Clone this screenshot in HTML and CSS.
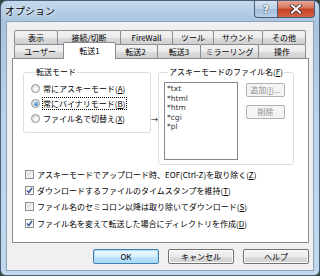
FILE: index.html
```html
<!DOCTYPE html>
<html lang="ja">
<head>
    <meta charset="UTF-8">
    <title>オプション</title>
    <link rel="stylesheet" href="styles.css">
</head>
<body>
<div class="window">
    <div class="titlebar">
        <span class="title">オプション</span>
        <div class="caption">
            <span class="cap-help">?</span>
            <span class="cap-close">
                <svg width="12" height="10" viewBox="0 0 12 10">
                    <path d="M2 1.5 L10 8.5 M10 1.5 L2 8.5" stroke="#3a2a2a" stroke-width="3.6" stroke-linecap="square"/>
                    <path d="M2 1.5 L10 8.5 M10 1.5 L2 8.5" stroke="#ffffff" stroke-width="2" stroke-linecap="square"/>
                </svg>
            </span>
        </div>
    </div>

    <div class="client">
        <div class="tabctl">
            <div class="tabrow">
                <div class="tab w44">表示</div>
                <div class="tab w64">接続/切断</div>
                <div class="tab w53">FireWall</div>
                <div class="tab w42">ツール</div>
                <div class="tab w50">サウンド</div>
                <div class="tab w44">その他</div>
            </div>
            <div class="tabrow">
                <div class="tab w52">ユーザー</div>
                <div class="tab w49 selected">転送1</div>
                <div class="tab w45">転送2</div>
                <div class="tab w44">転送3</div>
                <div class="tab w59">ミラーリング</div>
                <div class="tab w48">操作</div>
            </div>

            <div class="panel">
                <div class="toprow">
                    <fieldset class="group mode">
                        <legend>転送モード</legend>
                        <div class="radio"><span class="rb"></span><span>常にアスキーモード(<u>A</u>)</span></div>
                        <div class="radio"><span class="rb on"></span><span class="focus">常にバイナリモード(<u>B</u>)</span></div>
                        <div class="radio"><span class="rb"></span><span>ファイル名で切替え(<u>X</u>)</span></div>
                    </fieldset>

                    <div class="arrow">→</div>

                    <fieldset class="group ascii">
                        <legend>アスキーモードのファイル名(<u>F</u>)</legend>
                        <div class="listrow">
                            <ul class="listbox">
                                <li>*txt</li>
                                <li>*html</li>
                                <li>*htm</li>
                                <li>*cgi</li>
                                <li>*pl</li>
                            </ul>
                            <div class="sidebtns">
                                <div class="btn disabled">追加(<u>I</u>)...</div>
                                <div class="btn disabled">削除</div>
                            </div>
                        </div>
                    </fieldset>
                </div>

                <div class="checks">
                    <div class="check"><span class="cb"></span><span>アスキーモードでアップロード時、EOF(Ctrl-Z)を取り除く(<u>Z</u>)</span></div>
                    <div class="check"><span class="cb on"><svg width="7" height="7" viewBox="0 0 7 7"><path d="M1 3.5 L2.8 5.5 L6 1" fill="none" stroke="#3d5a94" stroke-width="1.5"/></svg></span><span>ダウンロードするファイルのタイムスタンプを維持(<u>T</u>)</span></div>
                    <div class="check"><span class="cb"></span><span>ファイル名のセミコロン以降は取り除いてダウンロード(<u>S</u>)</span></div>
                    <div class="check"><span class="cb on"><svg width="7" height="7" viewBox="0 0 7 7"><path d="M1 3.5 L2.8 5.5 L6 1" fill="none" stroke="#3d5a94" stroke-width="1.5"/></svg></span><span>ファイル名を変えて転送した場合にディレクトリを作成(<u>D</u>)</span></div>
                </div>
            </div>
        </div>

        <div class="buttons">
            <div class="btn default">OK</div>
            <div class="btn">キャンセル</div>
            <div class="btn">ヘルプ</div>
        </div>
    </div>
</div>
</body>
</html>
```

FILE: styles.css
```css
/* Page */
body {
  margin: 0;
  padding: 0;
  background-color: #2f4a3c;
  font-family: "Noto Sans CJK JP", "Noto Sans", sans-serif;
  font-size: 8px;
  color: #000;
}

/* Window frame */
.window {
  width: 320px;
  height: 276px;
  box-sizing: border-box;
  border: 1px solid #4c5f78;
  border-radius: 7px 7px 6px 6px;
  background: linear-gradient(180deg, #c6daee 0px, #b3cbe4 12px, #a9c3df 22px, #bcd3ea 120px, #c4d8ed 100%);
  overflow: hidden;
}

.titlebar {
  height: 20px;
  display: flex;
  justify-content: space-between;
  align-items: flex-start;
}

.title {
  margin: 3px 0 0 4px;
  font-size: 10px;
  line-height: 14px;
  text-shadow: 0 0 4px #eaf2fa, 0 0 2px #ffffff;
}

.caption {
  display: flex;
  margin-right: 4px;
}

.cap-help,
.cap-close {
  height: 17px;
  box-sizing: border-box;
  border: 1px solid #4a5d78;
  border-top: none;
  display: flex;
  align-items: center;
  justify-content: center;
}

.cap-help {
  width: 23px;
  border-right: none;
  border-radius: 0 0 0 4px;
  background: linear-gradient(180deg, #d6e4f2 0%, #bcd0e6 50%, #a6bfdc 51%, #b9cfe8 100%);
  color: #fff;
  font-family: "DejaVu Sans", sans-serif;
  font-weight: bold;
  font-size: 10px;
  text-shadow: 0 0 2px #334a66, 0 0 1px #334a66;
}

.cap-close {
  width: 38px;
  border-radius: 0 0 4px 0;
  background: linear-gradient(180deg, #e8a597 0%, #d6735d 45%, #c43f22 50%, #d46548 100%);
}

/* Client area */
.client {
  margin-left: 5px;
  width: 308px;
  height: 250px;
  box-sizing: border-box;
  border: 1px solid #8ba2bb;
  background-color: #f0f0f0;
}

/* Tabs */
.tabctl {
  margin: 8px 0 0 5px;
  width: 297px;
}

.tabrow {
  display: flex;
  height: 14px;
  padding-left: 2px;
}

.tab {
  box-sizing: border-box;
  height: 14px;
  margin-left: -1px;
  border: 1px solid #898c95;
  border-bottom: none;
  border-radius: 2px 2px 0 0;
  background: linear-gradient(180deg, #f3f3f3 0%, #ebebeb 50%, #dddddd 51%, #cfcfcf 100%);
  text-align: center;
  line-height: 13px;
  white-space: nowrap;
}

.tab:first-child {
  margin-left: 0;
}

.tab.selected {
  position: relative;
  z-index: 1;
  height: 17px;
  margin: -2px -2px -1px -3px;
  background: #ffffff;
  line-height: 16px;
}

.w42 { width: 42px; }
.w44 { width: 44px; }
.w45 { width: 45px; }
.w48 { width: 48px; }
.w49 { width: 53px; }
.w50 { width: 50px; }
.w52 { width: 52px; }
.w53 { width: 53px; }
.w59 { width: 59px; }
.w64 { width: 64px; }

.panel {
  height: 185px;
  box-sizing: border-box;
  border: 1px solid #898c95;
  background-color: #ffffff;
}

/* Group boxes */
.toprow {
  display: flex;
  align-items: flex-start;
  padding: 8px 0 0 10px;
}

.group {
  margin: 0;
  box-sizing: border-box;
  border: 1px solid #d5dfe5;
  border-radius: 3px;
}

.group legend {
  padding: 0 1px;
  margin-left: 4px;
  line-height: 10px;
}

.mode {
  width: 128px;
  padding: 4px 0 6px 7px;
}

.ascii {
  width: 136px;
  padding: 5px 0 4px 5px;
}

.radio {
  display: flex;
  align-items: center;
  height: 15px;
  gap: 3px;
}

.rb {
  width: 9px;
  height: 9px;
  box-sizing: border-box;
  border: 1px solid #929292;
  border-radius: 50%;
  background: radial-gradient(circle at 60% 65%, #ffffff 0%, #e6e6e6 60%, #d0d0d0 100%);
  display: flex;
  align-items: center;
  justify-content: center;
}

.rb.on::after {
  content: "";
  width: 4px;
  height: 4px;
  border-radius: 50%;
  background: radial-gradient(circle at 40% 35%, #8fd0f5 0%, #2a7cc0 60%, #16509a 100%);
}

.focus {
  outline: 1px dotted #000;
  outline-offset: 0;
}

.arrow {
  width: 7px;
  margin-top: 47px;
  line-height: 10px;
  font-size: 7px;
  text-align: center;
  overflow: visible;
  white-space: nowrap;
}

.listrow {
  display: flex;
  align-items: flex-start;
  gap: 8px;
}

.listbox {
  list-style: none;
  margin: 0;
  padding: 1px 0 0 2px;
  width: 74px;
  height: 78px;
  box-sizing: border-box;
  border: 1px solid #828790;
  background-color: #ffffff;
  font-family: "DejaVu Sans", sans-serif;
  font-size: 7.5px;
  line-height: 9.6px;
  color: #333;
}

.sidebtns {
  display: flex;
  flex-direction: column;
  gap: 8px;
  padding-top: 1px;
}

/* Checkboxes */
.checks {
  margin-top: 1px;
  padding-left: 12px;
}

.check {
  display: flex;
  align-items: center;
  height: 16.3px;
  gap: 3px;
  white-space: nowrap;
}

.cb {
  width: 9px;
  height: 9px;
  box-sizing: border-box;
  border: 1px solid #8e8f8f;
  background: linear-gradient(135deg, #d4d8dc 0%, #eceef0 60%, #fafafa 100%);
  box-shadow: inset 0 0 0 1px #f4f4f4;
  display: flex;
  align-items: center;
  justify-content: center;
}

.cb.on {
  background: #f6f6f6;
}

/* Buttons */
.buttons {
  display: flex;
  justify-content: flex-end;
  gap: 9px;
  margin-top: 6px;
  padding-right: 4px;
}

.btn {
  box-sizing: border-box;
  width: 66px;
  height: 15px;
  border: 1px solid #707070;
  border-radius: 2px;
  background: linear-gradient(180deg, #f2f2f2 0%, #ebebeb 50%, #dddddd 51%, #cfcfcf 100%);
  box-shadow: inset 0 0 0 1px #fcfcfc;
  text-align: center;
  line-height: 13px;
  white-space: nowrap;
}

.btn.default {
  border-color: #3c7fb1;
  box-shadow: inset 0 0 0 1px #b3dcf3;
  background: linear-gradient(180deg, #eaf6fd 0%, #d9f0fc 50%, #bee6fd 51%, #a7d9f5 100%);
}

.btn.disabled {
  width: 39px;
  height: 14px;
  border-color: #adb2b5;
  background: #f4f4f4;
  box-shadow: none;
  color: #8d8d8d;
  line-height: 12px;
}
```
